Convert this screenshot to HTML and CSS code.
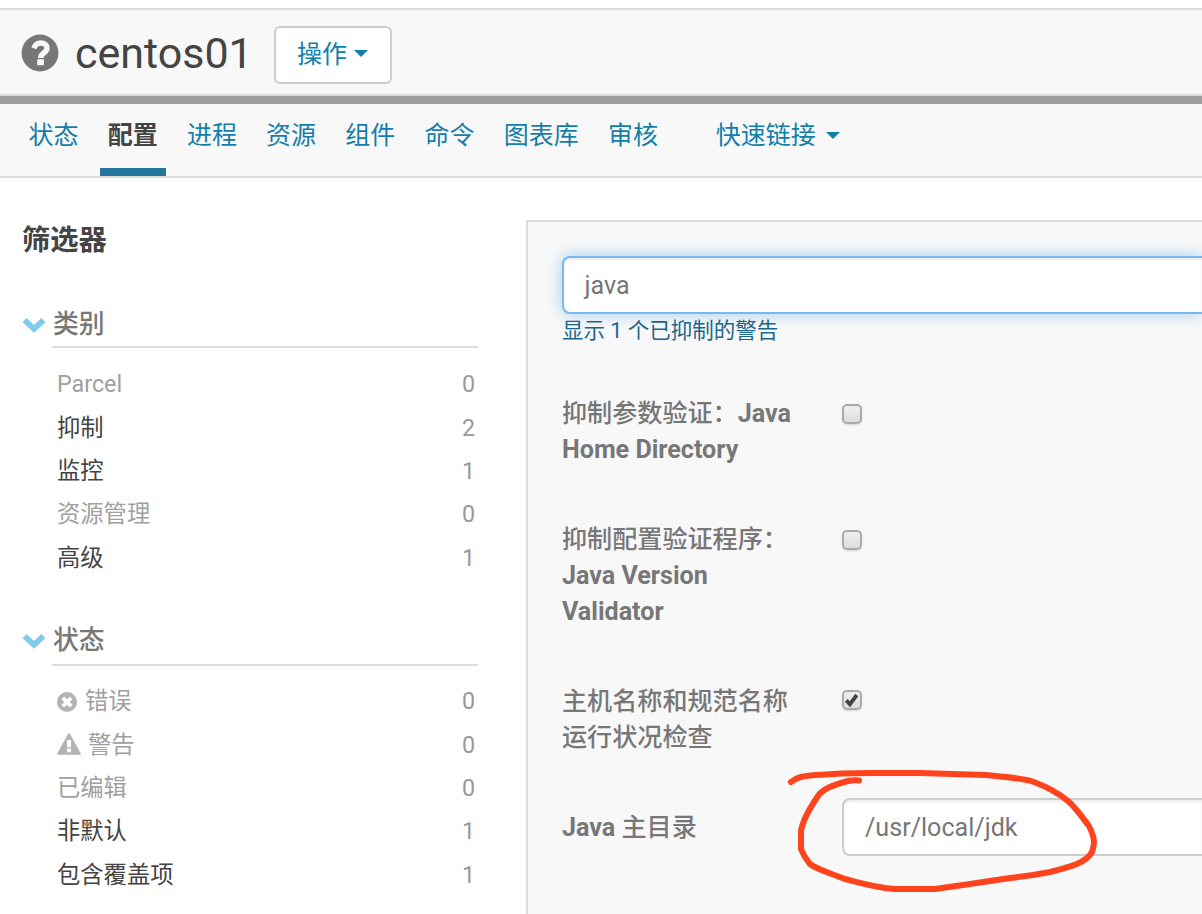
FILE: index.html
```html
<!DOCTYPE html>
<html lang="zh-CN">
<head>
<meta charset="utf-8">
<title>centos01 - 配置</title>
<link rel="stylesheet" href="styles.css">
</head>
<body>
<header class="host-header">
  <svg class="host-icon" viewBox="0 0 38 38"><circle cx="19" cy="19" r="18.5" fill="#777"/><path d="M12.800 14.200C14.200 10.500 16.600 9 19.700 9c3.800 0 6.300 2 6.300 5 0 5-6.400 5-6.400 10" fill="none" stroke="#f8f8f8" stroke-width="5.400"/><rect x="16.200" y="25.200" width="6.800" height="6" rx=".6" fill="#f8f8f8"/></svg>
  <h1 class="host-name">centos01</h1>
  <button class="action-button">操作<span class="caret"></span></button>
</header>
<nav class="tabs">
  <a class="tab">状态</a>
  <a class="tab active">配置</a>
  <a class="tab">进程</a>
  <a class="tab">资源</a>
  <a class="tab">组件</a>
  <a class="tab">命令</a>
  <a class="tab">图表库</a>
  <a class="tab">审核</a>
  <a class="tab quick-links">快速链接<span class="caret"></span></a>
</nav>
<div class="content">
  <aside class="filters">
    <h2 class="filters-title">筛选器</h2>
    <section class="group">
      <h3 class="group-title"><svg class="chevron" viewBox="0 0 24 16"><path d="M2.600 3.200 12 11.800l9.400-8.600" /></svg><span>类别</span></h3>
      <ul class="facets">
        <li class="facet empty"><span>Parcel</span><span class="count">0</span></li>
        <li class="facet"><span>抑制</span><span class="count">2</span></li>
        <li class="facet"><span>监控</span><span class="count">1</span></li>
        <li class="facet empty"><span>资源管理</span><span class="count">0</span></li>
        <li class="facet"><span>高级</span><span class="count">1</span></li>
      </ul>
    </section>
    <section class="group">
      <h3 class="group-title"><svg class="chevron" viewBox="0 0 24 16"><path d="M2.600 3.200 12 11.800l9.400-8.600" /></svg><span>状态</span></h3>
      <ul class="facets">
        <li class="facet empty"><svg class="error-icon" viewBox="0 0 20 20"><circle cx="10" cy="10" r="10" fill="#b3b3b3"/><path d="m5.800 5.800 8.400 8.400m0-8.400-8.400 8.400" stroke="#fff" stroke-width="3.800"/></svg><span>错误</span><span class="count">0</span></li>
        <li class="facet empty"><svg class="warning-icon" viewBox="0 0 24 22"><path d="M12 1.200 22.800 20.800H1.200z" fill="#b3b3b3" stroke="#b3b3b3" stroke-width="2" stroke-linejoin="round"/><path d="M9.800 7h4.400l-.4 7.200h-3.600zM10 15.500h4v3.700h-4z" fill="#fff"/></svg><span>警告</span><span class="count">0</span></li>
        <li class="facet empty"><span>已编辑</span><span class="count">0</span></li>
        <li class="facet"><span>非默认</span><span class="count">1</span></li>
        <li class="facet"><span>包含覆盖项</span><span class="count">1</span></li>
      </ul>
    </section>
  </aside>
  <main class="settings">
    <div class="field search">java</div>
    <a class="suppressed-link">显示 1 个已抑制的警告</a>
    <div class="setting"><div class="label">抑制参数验证：<b>Java</b><br><b>Home Directory</b></div><span class="checkbox"></span></div>
    <div class="setting"><div class="label">抑制配置验证程序：<br><b>Java Version</b><br><b>Validator</b></div><span class="checkbox"></span></div>
    <div class="setting host-check"><div class="label">主机名称和规范名称<br>运行状况检查</div><span class="checkbox"><svg viewBox="0 0 20 20"><path d="m4.300 10.400 3.600 3.900 6.900-9.300" fill="none" stroke="#444" stroke-width="3.800"/></svg></span></div>
    <div class="setting java-home"><div class="label"><b>Java</b> 主目录</div><div class="field path">/usr/local/jdk</div></div>
  </main>
</div>
<svg class="annotation" viewBox="780 750 422 164"><path d="M791 782C797 777 803 776 816 775C842 773 850 773 870 773H920L985 775C1006 777 1022 778 1034 782Q1055 790 1068 801C1078 810 1081 816 1089 826C1095 838 1095 844 1092 852C1086 863 1070 867 1050 872C1035 875 1020 877 1010 878L970 884L935 889H894C873 887 861 883 845 879C828 872 818 870 810 864Q804 857 801 849V831Q803 818 818 796C823 788 836 784 848 781Q854 780 859 780.500"/></svg>
</body>
</html>
```
FILE: styles.css
```css
* { box-sizing: border-box; }
body {
  margin: 0;
  padding-top: 8px;
  width: 1202px;
  height: 914px;
  overflow: hidden;
  background: #fff;
  color: #444;
  font-family: Roboto, "Noto Sans CJK SC", sans-serif;
}
h1, h2, h3, ul { margin: 0; padding: 0; }
.host-header {
  display: flex;
  align-items: center;
  height: 88px;
  padding: 5px 0 0 21px;
  background: #f8f8f8;
  border-top: 2px solid #ddd;
  border-bottom: 2px solid #ddd;
}
.host-icon { width: 38px; height: 38px; margin-top: -4px; }
.host-name {
  width: 199px;
  padding-left: 16px;
  margin-top: -3px;
  font-size: 43px;
  line-height: 50px;
  font-weight: 400;
}
.action-button {
  display: flex;
  align-items: center;
  width: 118px;
  height: 58px;
  margin-left: 16px;
  padding: 0 0 6px 21px;
  border: 2px solid #ccc;
  border-radius: 6px;
  background: #fff;
  color: #147eab;
  font: inherit;
  font-size: 25px;
}
.action-button .caret { margin-top: 3px; }
.caret {
  margin-left: 7px;
  border: 7px solid transparent;
  border-top: 7px solid #147eab;
  border-bottom: 0;
}
.tabs {
  display: flex;
  gap: 13.200px;
  height: 82px;
  padding-left: 20.500px;
  border-top: 8px solid #9e9e9e;
  border-bottom: 2px solid #ddd;
  background: #f8f8f8;
}
.tab {
  height: 72px;
  padding: 13px 8px 0;
  color: #147eab;
  font-size: 25px;
  line-height: 38px;
}
.tab.active {
  color: #444;
  font-weight: 700;
  border-bottom: 8px solid #23759b;
}
.quick-links { display: flex; margin-left: 28.500px; }
.quick-links .caret { align-self: flex-start; margin: 15px 0 0 10px; }
.content { display: flex; height: 736px; }
.filters { width: 526px; padding: 41px 48px 0 22px; }
.filters-title { font-size: 28.300px; line-height: 44px; font-weight: 700; }
.group { padding-top: 38px; }
.group-title {
  display: flex;
  align-items: center;
  height: 47px;
  color: #777;
  font-size: 25.800px;
  line-height: 46px;
  font-weight: 500;
}
.group-title span {
  flex: 1;
  height: 47px;
  margin-left: 6px;
  padding-left: 1px;
  border-bottom: 2px solid #ddd;
}
.group + .group .group-title { height: 48px; line-height: 44px; }
.group + .group .group-title span { height: 48px; }
.group + .group .chevron { margin-top: -2px; }
.chevron { width: 24px; height: 16px; }
.chevron path { fill: none; stroke: #80caeb; stroke-width: 5.800; stroke-linejoin: miter; }
.facets { list-style: none; padding: 15px 3px 0 35px; }
.group + .group .facets { padding-top: 14px; }
.facet {
  display: flex;
  align-items: center;
  height: 43.400px;
  color: #444;
  font-size: 23.300px;
  line-height: 43px;
}
.facet.empty { color: #a0a0a0; }
.count { margin-left: auto; color: #999; }
.error-icon { width: 20px; height: 20px; margin-right: 8px; }
.warning-icon { width: 24px; height: 22px; margin: -3px 7px 0 0; }
.settings {
  flex: 1;
  height: 694px;
  margin-top: 42px;
  padding: 34px 0 0 34px;
  background: #f8f8f8;
  border: 2px solid #ddd;
  border-right: 0;
  border-bottom: 0;
}
.field {
  height: 58px;
  padding-left: 21px;
  border: 2px solid #ccc;
  border-right: 0;
  border-radius: 8px 0 0 8px;
  background: #fff;
  box-shadow: inset 0 2px 2px rgba(0, 0, 0, .075);
  color: #777;
  font-size: 25.100px;
  line-height: 55px;
}
.search {
  padding-left: 20.500px;
  border-color: #75b9f0;
  box-shadow: inset 0 2px 2px rgba(0, 0, 0, .075), 0 0 16px rgba(102, 175, 233, .6);
  line-height: 56px;
}
.suppressed-link {
  display: block;
  height: 32px;
  color: #1d668a;
  font-size: 21.500px;
  line-height: 34px;
}
.setting { display: flex; margin-top: 54px; }
.suppressed-link + .setting { margin-top: 50px; }
.label {
  width: 280px;
  color: #777;
  font-size: 25.100px;
  line-height: 36px;
  font-weight: 500;
}
.label b { font-weight: 700; }
.checkbox {
  width: 20px;
  height: 20px;
  margin-top: 8px;
  border: 2px solid #aaa;
  border-radius: 5px;
  background: linear-gradient(#eee, #ddd);
  box-shadow: 0 1px 2px rgba(0, 0, 0, .15);
}
.host-check .checkbox { margin-top: 6px; }
.checkbox svg { display: block; width: 20px; height: 20px; margin: -2px; }
.java-home { align-items: center; margin-top: 42px; }
.java-home .label { padding-top: 1px; }
.path { flex: 1; }
.annotation {
  position: absolute;
  left: 780px;
  top: 750px;
  width: 422px;
  height: 164px;
}
.annotation path {
  fill: none;
  stroke: #ff431c;
  stroke-width: 6;
  stroke-linecap: round;
  stroke-linejoin: round;
}
```
